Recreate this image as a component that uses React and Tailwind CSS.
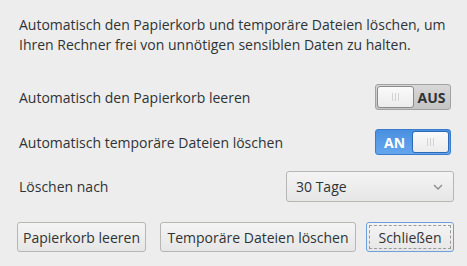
import React from "react";

function Grip() {
  return (
    <div className="flex gap-[2px]">
      <div className="w-px h-[8px] bg-[#d3d3d3]" />
      <div className="w-px h-[8px] bg-[#d3d3d3]" />
      <div className="w-px h-[8px] bg-[#d3d3d3]" />
    </div>
  );
}

function SwitchOff() {
  return (
    <div className="w-[76px] h-[26px] rounded-[3px] border border-[#a1a1a1] bg-gradient-to-b from-[#d8d8d8] to-[#c4c4c4] flex items-center p-px">
      <div className="w-[37px] h-[22px] rounded-[3px] border border-[#8a8a8a] bg-gradient-to-b from-[#fafafa] to-[#ececec] flex items-center justify-center">
        <Grip />
      </div>
      <div className="flex-1 text-center font-bold text-[14px] text-[#2e3436]">AUS</div>
    </div>
  );
}

function SwitchOn() {
  return (
    <div className="w-[76px] h-[26px] rounded-[3px] border border-[#3a7ccc] bg-gradient-to-b from-[#4a90e0] to-[#65a5ee] flex items-center p-px">
      <div className="flex-1 text-center font-bold text-[14px] text-white">AN</div>
      <div className="w-[37px] h-[22px] rounded-[3px] border border-[#2c6ab8] bg-gradient-to-b from-[#fafafa] to-[#ececec] flex items-center justify-center">
        <Grip />
      </div>
    </div>
  );
}

function Btn({ children, focus, w }) {
  return (
    <div
      className={
        "h-[30px] rounded-[3px] border bg-gradient-to-b from-[#f4f4f4] to-[#e6e6e6] flex items-stretch p-[2px] whitespace-nowrap " +
        w +
        " " +
        (focus ? "border-[#6c9fde]" : "border-[#b6b6b3]")
      }
    >
      <div
        className={
          "flex-1 flex items-center justify-center " +
          (focus ? "border border-dashed border-[#9a9a9a]" : "")
        }
      >
        {children}
      </div>
    </div>
  );
}

export default function App() {
  return (
    <div
      className="w-[467px] h-[266px] bg-[#ededed] text-[#2e3436] text-[14px] overflow-hidden whitespace-nowrap"
      style={{ fontFamily: '"Open Sans", "Noto Sans", sans-serif' }}
    >
      <div className="px-[19px] pt-[15px] leading-[20px]">
        <div>Automatisch den Papierkorb und temporäre Dateien löschen, um</div>
        <div>Ihren Rechner frei von unnötigen sensiblen Daten zu halten.</div>
      </div>
      <div className="pl-[19px] pr-[16px] pt-[29px] flex flex-col">
        <div className="flex items-center justify-between h-[26px]">
          <span>Automatisch den Papierkorb leeren</span>
          <SwitchOff />
        </div>
        <div className="flex items-center justify-between h-[26px] mt-[19px]">
          <span>Automatisch temporäre Dateien löschen</span>
          <SwitchOn />
        </div>
        <div className="flex items-center justify-between h-[31px] mt-[16px]">
          <span>Löschen nach</span>
          <div className="w-[168px] h-[31px] mr-[-3px] rounded-[3px] border border-[#b6b6b3] bg-gradient-to-b from-[#f4f4f4] to-[#e6e6e6] flex items-center justify-between pl-[9px] pr-[10px]">
            <span>30 Tage</span>
            <svg width="10" height="6" viewBox="0 0 10 6" fill="none">
              <path d="M1 1l4 4 4-4" stroke="#8a8a8a" strokeWidth="1.3" />
            </svg>
          </div>
        </div>
      </div>
      <div className="flex items-center mt-[20px] pl-[17px] pr-[13px]">
        <div className="flex gap-[14px]">
          <Btn w="w-[129px]">Papierkorb leeren</Btn>
          <Btn w="w-[196px]">Temporäre Dateien löschen</Btn>
        </div>
        <div className="ml-auto">
          <Btn focus w="w-[88px]">Schließen</Btn>
        </div>
      </div>
    </div>
  );
}
